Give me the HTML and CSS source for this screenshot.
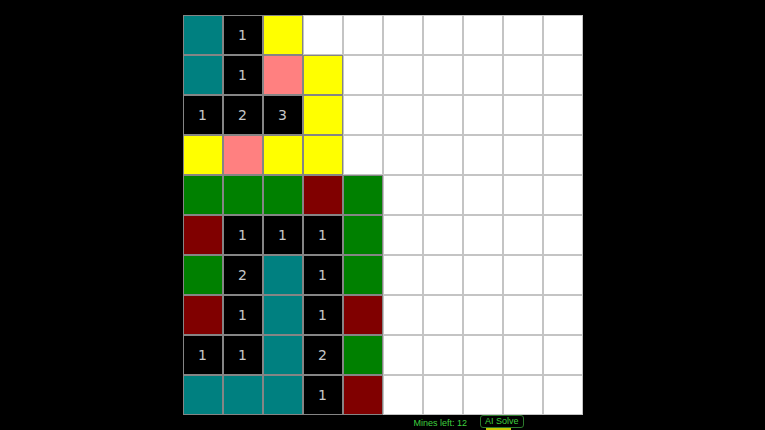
FILE: index.html
```html
<!DOCTYPE html>
<html>
<head>
<meta charset="utf-8">
<link rel="stylesheet" href="styles.css">
</head>
<body>
<div class="app">
  <div class="board">
    <div class="c t"></div><div class="c n">1</div><div class="c y"></div><div class="c w"></div><div class="c w"></div><div class="c w"></div><div class="c w"></div><div class="c w"></div><div class="c w"></div><div class="c w"></div>
    <div class="c t"></div><div class="c n">1</div><div class="c p"></div><div class="c y"></div><div class="c w"></div><div class="c w"></div><div class="c w"></div><div class="c w"></div><div class="c w"></div><div class="c w"></div>
    <div class="c n">1</div><div class="c n">2</div><div class="c n">3</div><div class="c y"></div><div class="c w"></div><div class="c w"></div><div class="c w"></div><div class="c w"></div><div class="c w"></div><div class="c w"></div>
    <div class="c y"></div><div class="c p"></div><div class="c y"></div><div class="c y"></div><div class="c w"></div><div class="c w"></div><div class="c w"></div><div class="c w"></div><div class="c w"></div><div class="c w"></div>
    <div class="c g"></div><div class="c g"></div><div class="c g"></div><div class="c r"></div><div class="c g"></div><div class="c w"></div><div class="c w"></div><div class="c w"></div><div class="c w"></div><div class="c w"></div>
    <div class="c r"></div><div class="c n">1</div><div class="c n">1</div><div class="c n">1</div><div class="c g"></div><div class="c w"></div><div class="c w"></div><div class="c w"></div><div class="c w"></div><div class="c w"></div>
    <div class="c g"></div><div class="c n">2</div><div class="c t"></div><div class="c n">1</div><div class="c g"></div><div class="c w"></div><div class="c w"></div><div class="c w"></div><div class="c w"></div><div class="c w"></div>
    <div class="c r"></div><div class="c n">1</div><div class="c t"></div><div class="c n">1</div><div class="c r"></div><div class="c w"></div><div class="c w"></div><div class="c w"></div><div class="c w"></div><div class="c w"></div>
    <div class="c n">1</div><div class="c n">1</div><div class="c t"></div><div class="c n">2</div><div class="c g"></div><div class="c w"></div><div class="c w"></div><div class="c w"></div><div class="c w"></div><div class="c w"></div>
    <div class="c t"></div><div class="c t"></div><div class="c t"></div><div class="c n">1</div><div class="c r"></div><div class="c w"></div><div class="c w"></div><div class="c w"></div><div class="c w"></div><div class="c w"></div>
  </div>
  <div class="footer">
    <span class="mines">Mines left: 12</span>
    <div class="solve-wrap">
      <button class="solve">AI Solve</button>
      <div class="solve-bar"></div>
    </div>
  </div>
</div>
</body>
</html>
```

FILE: styles.css
```css
html, body {
  margin: 0;
  padding: 0;
  background: #000;
  height: 100%;
  overflow: hidden;
}
.app {
  display: flex;
  flex-direction: column;
  align-items: center;
  padding-top: 15px;
  font-family: "Liberation Sans", Arial, sans-serif;
}
.board {
  display: grid;
  grid-template-columns: repeat(10, 40px);
  grid-template-rows: repeat(10, 40px);
  width: 400px;
}
.c {
  box-sizing: border-box;
  border: 1px solid #858585;
  display: flex;
  align-items: center;
  justify-content: center;
  font-family: "DejaVu Sans", sans-serif;
  font-size: 14px;
  color: #c8c8c8;
}
.t { background: #008080; }
.y { background: #ffff00; }
.p { background: #ff8080; }
.g { background: #008000; }
.r { background: #800000; }
.n { background: #000; }
.w { background: #fff; border-color: #c4c4c4; }
.footer {
  width: 400px;
  box-sizing: border-box;
  padding-left: 231px;
  display: flex;
  align-items: flex-start;
  gap: 13px;
}
.mines {
  font-size: 9px;
  color: #3fcf3f;
  line-height: 14px;
  padding-top: 1px;
}
.solve-wrap {
  display: flex;
  flex-direction: column;
  align-items: flex-start;
}
.solve {
  font-family: "Liberation Sans", Arial, sans-serif;
  font-size: 9px;
  color: #3fcf3f;
  background: #000;
  border: 1px solid #2c7a2c;
  border-radius: 3px;
  padding: 1px 4px;
  height: 13px;
  line-height: 9px;
  margin: 0;
}
.solve-bar {
  width: 25px;
  height: 3px;
  margin-left: 6px;
  background: #c8c800;
}
```
